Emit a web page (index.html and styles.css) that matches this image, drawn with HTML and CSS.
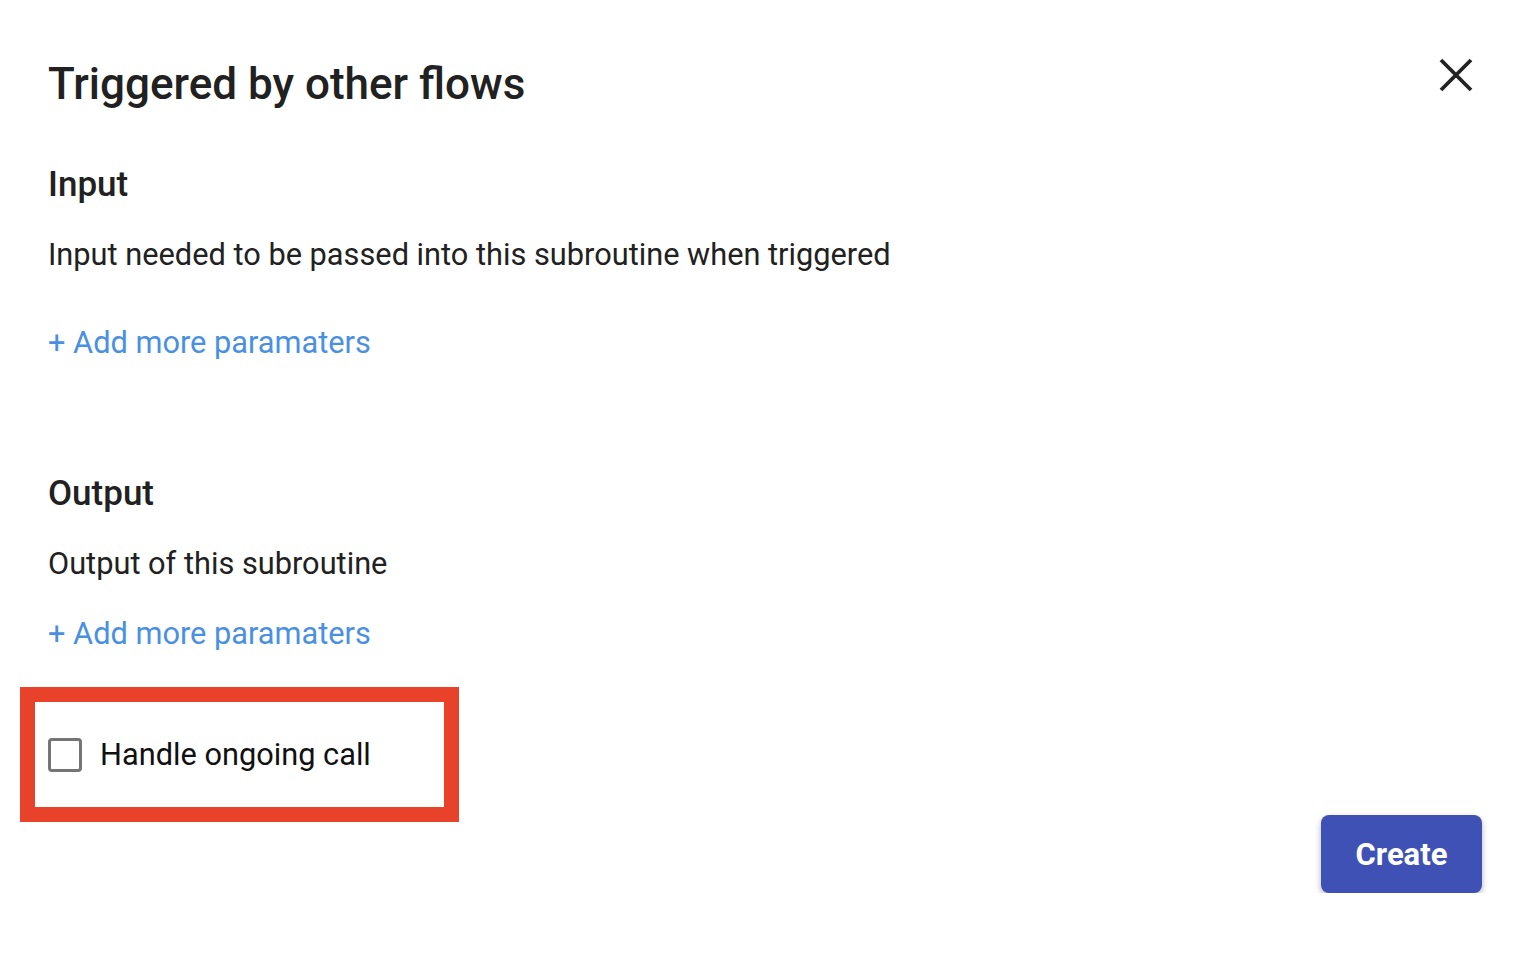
FILE: index.html
```html
<!DOCTYPE html>
<html lang="en">

<head>
    <meta charset="UTF-8">
    <meta name="viewport" content="width=device-width, initial-scale=1.0">
    <title>Triggered by other flows</title>
    <link rel="stylesheet" href="styles.css">
</head>

<body>
    <div class="dialog">
        <div class="dialog-header">
            <h1>Triggered by other flows</h1>
            <button type="button" class="close-btn" aria-label="Close">
                <svg width="34" height="34" viewBox="0 0 34 34">
                    <path d="M2 2 L32 32 M32 2 L2 32" stroke="#222" stroke-width="3.8" fill="none" />
                </svg>
            </button>
        </div>

        <section class="section">
            <h2>Input</h2>
            <p class="desc">Input needed to be passed into this subroutine when triggered</p>
            <a href="#" class="add-link input-link">+ Add more paramaters</a>
        </section>

        <section class="section output">
            <h2>Output</h2>
            <p class="desc">Output of this subroutine</p>
            <a href="#" class="add-link">+ Add more paramaters</a>
        </section>

        <div class="dialog-footer">
            <div class="highlight">
                <label class="check-row">
                    <span class="checkbox"></span>
                    <span>Handle ongoing call</span>
                </label>
            </div>
            <button type="button" class="create-btn">Create</button>
        </div>
    </div>
</body>

</html>
```

FILE: styles.css
```css
* {
    box-sizing: border-box;
}

body {
    margin: 0;
    background-color: #fff;
    font-family: Roboto, "Noto Sans", Arial, sans-serif;
    color: #212121;
}

.dialog {
    padding: 56px 48px 0 48px;
}

.dialog-header {
    display: flex;
    justify-content: space-between;
    align-items: flex-start;
}

h1 {
    margin: 0;
    font-size: 44px;
    font-weight: 500;
    line-height: 56px;
}

.close-btn {
    background: none;
    border: none;
    padding: 0;
    margin: 2px 9px 0 0;
    cursor: pointer;
}

.section h2 {
    margin: 0;
    font-size: 35px;
    font-weight: 500;
    line-height: 40px;
}

.section {
    margin-top: 111px;
}

.section:first-of-type {
    margin-top: 53px;
}

.desc {
    margin: 30px 0 0 0;
    font-size: 30.75px;
    line-height: 40px;
}

.add-link {
    display: inline-block;
    margin-top: 48px;
    font-size: 30.75px;
    line-height: 40px;
    color: #4a90e2;
    text-decoration: none;
}

.output .add-link {
    margin-top: 30px;
}

.dialog-footer {
    display: flex;
    justify-content: space-between;
    align-items: flex-start;
}

.highlight {
    margin: 33px 0 0 -28px;
    width: 439px;
    height: 135px;
    border: 15px solid #e8432a;
    display: flex;
    align-items: center;
    padding-left: 13px;
}

.check-row {
    display: flex;
    align-items: center;
    gap: 18px;
    font-size: 30.75px;
    color: #111;
}

.checkbox {
    width: 34px;
    height: 34px;
    border: 3px solid #757575;
    border-radius: 4px;
}

.create-btn {
    margin: 161px 0 0 0;
    width: 161px;
    height: 78px;
    background-color: #3f51b5;
    color: #fff;
    border: none;
    border-radius: 8px;
    font-family: Roboto, Arial, sans-serif;
    font-size: 31px;
    font-weight: 700;
    box-shadow: 0 3px 6px rgba(0, 0, 0, 0.3);
    cursor: pointer;
}
```
